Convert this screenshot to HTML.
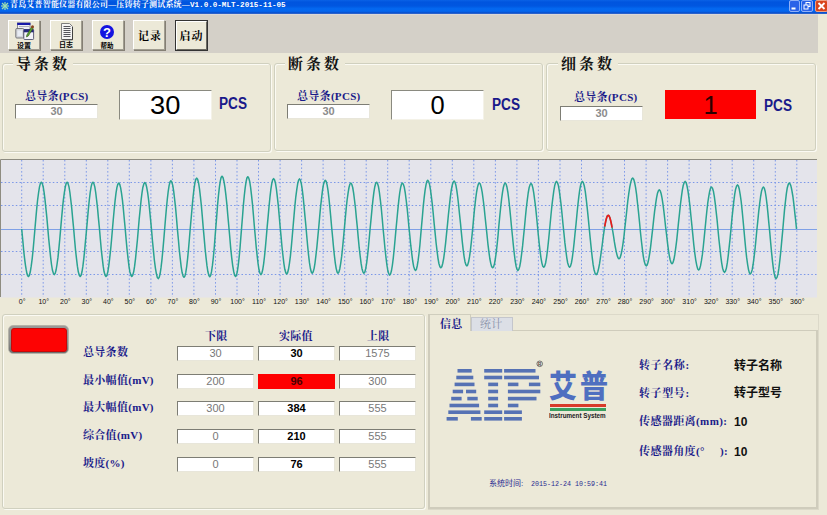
<!DOCTYPE html>
<html><head><meta charset="utf-8"><title>压铸转子测试系统</title>
<style>
html,body{margin:0;padding:0}
body{width:827px;height:515px;overflow:hidden;background:#ece9d8;position:relative;font-family:"Liberation Sans","Noto Sans CJK SC",sans-serif}
div{position:absolute;box-sizing:border-box;white-space:nowrap}
.serif{font-family:"Liberation Serif","Noto Serif CJK SC",serif}
#title{left:0;top:0;width:827px;height:13.500px;background:linear-gradient(#0a62e6 0,#0054de 15%,#0056e0 42%,#0468f0 62%,#0466ee 80%,#0a4cc8 93%,#4a78d0 100%)}
#title span{position:absolute;left:10px;top:-1px;font:bold 8px/11px "Liberation Serif","Noto Serif CJK SC",serif;color:#fff;letter-spacing:0.18px}
#tb{left:0;top:13.500px;width:818px;height:39px;background:#d4d0c8;border-top:1px solid #dcd8d8}
.btn{background:#ece9d8;border:1px solid;border-color:#fff #a09c90 #a09c90 #fff;box-shadow:1px 1px 0 #847f74}
.btn .t{left:0;width:100%;text-align:center;font-size:7px;line-height:8px;color:#000;font-weight:bold}
.gb{border:1px solid #d0d0bf;border-radius:3px;box-shadow:inset 1px 1px 0 #fbfaf3, 1px 1px 0 #fbfaf3}
.gt{background:#ece9d8;font:bold 15px/20px "Liberation Serif","Noto Serif CJK SC",serif;color:#111;padding:0 3px;letter-spacing:3px}
.lbl{font:bold 11px/16px "Liberation Serif","Noto Serif CJK SC",serif;color:#1a1a8a;letter-spacing:0.3px}
.fld{background:#fff;border:1px solid;border-color:#7d7d74 #e8e6da #e8e6da #7d7d74;text-align:center;font-size:11px}
.fld.g{color:#8c8c8c;font-weight:bold}
.fld.n{font-weight:normal;color:#787878}
.fld.b{color:#000;font-weight:bold}
.fld.red{background:#fe0000;color:#4a0000;border-color:#fe0000}
.big{background:#fff;border:1px solid;border-color:#8a8a80 #f4f2e8 #f4f2e8 #8a8a80;text-align:center;font-size:25.500px;line-height:28px;color:#000}
.pcs{font:bold 16px/16px "Liberation Sans",sans-serif;color:#1a1a8a;transform:scaleX(0.85);transform-origin:0 0}
</style></head><body>
<div id="title"><span>青岛艾普智能仪器有限公司—压铸转子测试系统—<b style="font:bold 7.600px/11px 'Liberation Mono',monospace;letter-spacing:0">V1.0.0-MLT-2015-11-05</b></span>
<svg style="position:absolute;left:0;top:1px" width="10" height="10" viewBox="0 0 10 10"><g stroke="#9fe0b0" stroke-width="1.2"><line x1="1" y1="5" x2="9" y2="5"/><line x1="5" y1="1" x2="5" y2="9"/><line x1="2" y1="2" x2="8" y2="8"/><line x1="8" y1="2" x2="2" y2="8"/></g></svg>
<svg style="position:absolute;left:788px;top:0" width="39" height="13" viewBox="0 0 39 13">
<rect x="1.5" y="0.5" width="10" height="11" rx="1.5" fill="#2a62e8" stroke="#8fb0f8" stroke-width="1"/><rect x="3.5" y="7.5" width="4" height="2" fill="#fff"/>
<rect x="13.500" y="0.5" width="11" height="11" rx="1.5" fill="#2a62e8" stroke="#8fb0f8" stroke-width="1"/><rect x="18" y="2.500" width="4" height="4" fill="none" stroke="#fff"/><rect x="16" y="5" width="4" height="4" fill="#2a62e8" stroke="#fff"/>
<rect x="27.500" y="0.5" width="12" height="11" rx="1.5" fill="#d8441c" stroke="#f0a080" stroke-width="1"/><path d="M30.5 3 L36.500 9 M36.500 3 L30.5 9" stroke="#fff" stroke-width="1.8"/>
</svg>
</div>
<div id="tb"></div>

<!-- toolbar buttons -->
<div class="btn" style="left:8px;top:20px;width:32px;height:30px">
<svg style="position:absolute;left:5px;top:1px" width="21" height="19" viewBox="0 0 21 19">
<rect x="3.500" y="1" width="12.500" height="8" fill="#eeeef4" stroke="#70707c" stroke-width="0.8"/><rect x="3.200" y="0.800" width="13.200" height="2.200" fill="#1818a8"/>
<line x1="5" y1="4.500" x2="15" y2="4.500" stroke="#a0a0b0" stroke-width="0.8"/>
<rect x="1.800" y="6.500" width="8" height="9.500" rx="1" fill="#d4d6dc" stroke="#6c6c70" stroke-width="0.9"/><rect x="3.500" y="8.500" width="4.500" height="5.500" fill="#e8ecf4"/>
<rect x="9.800" y="7.500" width="9.800" height="10" rx="0.8" fill="#f4f4fa" stroke="#50506c" stroke-width="0.9"/><rect x="9.800" y="7.300" width="9.800" height="3" fill="#26267c"/>
<path d="M17.600 5 L12.800 13 L12.500 15 L14.300 14 L19.200 6 Z" fill="#58a834" stroke="#385018" stroke-width="0.6"/><circle cx="18.500" cy="4.800" r="1.500" fill="#8a4420"/>
</svg>
<div class="t" style="top:20.500px">设置</div></div>
<div class="btn" style="left:50px;top:20px;width:32px;height:30px">
<svg style="position:absolute;left:9px;top:2px" width="14" height="18" viewBox="0 0 14 18">
<path d="M1.500 0.5 H9.500 L12.500 3.500 V16.500 H1.500 Z" fill="#f4f4f4" stroke="#707070" stroke-width="0.9"/><path d="M12.500 4 V16.800 H2.500" stroke="#404040" stroke-width="1" fill="none"/>
<g stroke="#55555c" stroke-width="1"><line x1="3.500" y1="3.500" x2="10.500" y2="3.500"/><line x1="3.500" y1="5.500" x2="10.500" y2="5.500"/><line x1="3.500" y1="7.500" x2="10.500" y2="7.500"/><line x1="3.500" y1="9.500" x2="10.500" y2="9.500"/><line x1="3.500" y1="11.500" x2="10.500" y2="11.500"/><line x1="3.500" y1="13.500" x2="10.500" y2="13.500"/></g>
</svg>
<div class="t" style="top:20px">日志</div></div>
<div class="btn" style="left:92px;top:20px;width:32px;height:30px">
<svg style="position:absolute;left:6px;top:3px" width="16" height="16" viewBox="0 0 16 16"><circle cx="8" cy="8" r="7" fill="#1414e0"/><text x="8" y="12.500" text-anchor="middle" font-family="Liberation Sans, sans-serif" font-weight="bold" font-size="13" fill="#fff">?</text></svg>
<div class="t" style="top:21px;left:-1px;font-size:6.500px">帮助</div></div>
<div class="btn" style="left:133px;top:20px;width:32px;height:30px"><div class="t serif" style="top:9px;left:1px;font-size:11px;font-weight:bold;line-height:12px;letter-spacing:1px">记录</div></div>
<div class="btn" style="left:176px;top:21px;width:31px;height:29px;outline:1px solid #333;box-shadow:none;border-color:#fff #6c6a62 #6c6a62 #fff"><div class="t serif" style="top:8px;font-size:11px;font-weight:bold;line-height:12px;letter-spacing:1px">启动</div></div>

<!-- group boxes -->
<div class="gb" style="left:2px;top:63px;width:269px;height:89px"></div>
<div class="gt" style="left:13px;top:54px">导条数</div>
<div class="lbl" style="left:25px;top:88px">总导条(PCS)</div>
<div class="fld g" style="left:15px;top:104px;width:83px;height:15px;line-height:13px">30</div>
<div class="big" style="left:119px;top:90px;width:93px;height:30px"><span style="display:inline-block;transform:scaleX(1.07)">30</span></div>
<div class="pcs" style="left:219px;top:96px">PCS</div>

<div class="gb" style="left:274px;top:63px;width:269px;height:88px"></div>
<div class="gt" style="left:285px;top:54px">断条数</div>
<div class="lbl" style="left:297px;top:88px">总导条(PCS)</div>
<div class="fld g" style="left:287px;top:104px;width:83px;height:15px;line-height:13px">30</div>
<div class="big" style="left:391px;top:90px;width:93px;height:30px">0</div>
<div class="pcs" style="left:491.500px;top:96.500px">PCS</div>

<div class="gb" style="left:546px;top:63px;width:270px;height:88px"></div>
<div class="gt" style="left:558px;top:54px">细条数</div>
<div class="lbl" style="left:574px;top:89px">总导条(PCS)</div>
<div class="fld g" style="left:560px;top:106px;width:83px;height:15px;line-height:13px">30</div>
<div class="big" style="left:665px;top:90px;width:91px;height:29px;background:#fe0000;border-color:#fe0000;color:#2a0000">1</div>
<div class="pcs" style="left:764px;top:98px">PCS</div>

<!-- chart -->
<svg style="position:absolute;left:0;top:155px" width="827" height="155" viewBox="0 155 827 155">
<rect x="0" y="159" width="817" height="138.500" fill="#e4e4eb"/>
<path d="M0.5 297 V159.500 H817" fill="none" stroke="#8e8c80" stroke-width="1"/>
<g stroke="#6f8fe8" stroke-width="1" stroke-dasharray="1.500 2.200" opacity="0.9"><line x1="21.7" y1="160" x2="21.7" y2="297"/><line x1="43.2" y1="160" x2="43.2" y2="297"/><line x1="64.8" y1="160" x2="64.8" y2="297"/><line x1="86.3" y1="160" x2="86.3" y2="297"/><line x1="107.8" y1="160" x2="107.8" y2="297"/><line x1="129.3" y1="160" x2="129.3" y2="297"/><line x1="150.9" y1="160" x2="150.9" y2="297"/><line x1="172.4" y1="160" x2="172.4" y2="297"/><line x1="193.9" y1="160" x2="193.9" y2="297"/><line x1="215.5" y1="160" x2="215.5" y2="297"/><line x1="237.0" y1="160" x2="237.0" y2="297"/><line x1="258.5" y1="160" x2="258.5" y2="297"/><line x1="280.1" y1="160" x2="280.1" y2="297"/><line x1="301.6" y1="160" x2="301.6" y2="297"/><line x1="323.1" y1="160" x2="323.1" y2="297"/><line x1="344.7" y1="160" x2="344.7" y2="297"/><line x1="366.2" y1="160" x2="366.2" y2="297"/><line x1="387.7" y1="160" x2="387.7" y2="297"/><line x1="409.2" y1="160" x2="409.2" y2="297"/><line x1="430.8" y1="160" x2="430.8" y2="297"/><line x1="452.3" y1="160" x2="452.3" y2="297"/><line x1="473.8" y1="160" x2="473.8" y2="297"/><line x1="495.4" y1="160" x2="495.4" y2="297"/><line x1="516.9" y1="160" x2="516.9" y2="297"/><line x1="538.4" y1="160" x2="538.4" y2="297"/><line x1="560.0" y1="160" x2="560.0" y2="297"/><line x1="581.5" y1="160" x2="581.5" y2="297"/><line x1="603.0" y1="160" x2="603.0" y2="297"/><line x1="624.5" y1="160" x2="624.5" y2="297"/><line x1="646.1" y1="160" x2="646.1" y2="297"/><line x1="667.6" y1="160" x2="667.6" y2="297"/><line x1="689.1" y1="160" x2="689.1" y2="297"/><line x1="710.7" y1="160" x2="710.7" y2="297"/><line x1="732.2" y1="160" x2="732.2" y2="297"/><line x1="753.7" y1="160" x2="753.7" y2="297"/><line x1="775.3" y1="160" x2="775.3" y2="297"/><line x1="796.8" y1="160" x2="796.8" y2="297"/><line x1="1" y1="182.5" x2="817" y2="182.5"/><line x1="1" y1="205.5" x2="817" y2="205.5"/><line x1="1" y1="251.5" x2="817" y2="251.5"/><line x1="1" y1="274.5" x2="817" y2="274.5"/></g>
<line x1="1" y1="229.500" x2="817" y2="229.500" stroke="#7fa0e6" stroke-width="1"/>
<path d="M21.7 229.0 L22.2 234.3 L22.7 239.6 L23.2 244.7 L23.6 249.6 L24.1 254.3 L24.6 258.6 L25.1 262.6 L25.6 266.1 L26.1 269.2 L26.6 271.8 L27.0 273.8 L27.5 275.3 L28.0 276.2 L28.5 276.5 L29.4 275.3 L30.3 271.8 L31.2 266.2 L32.2 258.7 L33.1 249.8 L34.0 239.8 L34.9 229.3 L35.8 218.9 L36.7 208.9 L37.6 200.0 L38.6 192.5 L39.5 186.9 L40.4 183.4 L41.3 182.2 L42.2 183.4 L43.2 186.8 L44.1 192.3 L45.0 199.6 L45.9 208.4 L46.9 218.1 L47.8 228.4 L48.7 238.7 L49.7 248.4 L50.6 257.2 L51.5 264.5 L52.4 270.0 L53.4 273.4 L54.3 274.6 L55.2 273.4 L56.1 270.0 L57.0 264.5 L58.0 257.2 L58.9 248.4 L59.8 238.7 L60.7 228.4 L61.6 218.1 L62.5 208.4 L63.4 199.6 L64.4 192.3 L65.3 186.8 L66.2 183.4 L67.1 182.2 L68.0 183.4 L69.0 186.9 L69.9 192.5 L70.8 200.0 L71.8 208.9 L72.7 218.9 L73.7 229.3 L74.6 239.8 L75.5 249.8 L76.5 258.7 L77.4 266.2 L78.3 271.8 L79.3 275.3 L80.2 276.5 L81.1 275.3 L82.0 271.8 L82.9 266.2 L83.8 258.7 L84.7 249.8 L85.6 239.8 L86.6 229.3 L87.5 218.9 L88.4 208.9 L89.3 200.0 L90.2 192.5 L91.1 186.9 L92.0 183.4 L92.9 182.2 L93.8 183.4 L94.8 186.9 L95.7 192.5 L96.6 200.0 L97.6 208.9 L98.5 218.9 L99.5 229.3 L100.4 239.8 L101.3 249.8 L102.3 258.7 L103.2 266.2 L104.1 271.8 L105.1 275.3 L106.0 276.5 L106.9 275.3 L107.8 271.9 L108.7 266.3 L109.6 258.9 L110.6 250.0 L111.5 240.2 L112.4 229.8 L113.3 219.3 L114.2 209.5 L115.1 200.6 L116.0 193.2 L116.9 187.6 L117.8 184.2 L118.8 183.0 L119.7 184.2 L120.6 187.6 L121.5 193.2 L122.5 200.6 L123.4 209.5 L124.3 219.3 L125.3 229.8 L126.2 240.2 L127.1 250.0 L128.1 258.9 L129.0 266.3 L129.9 271.9 L130.9 275.3 L131.8 276.5 L132.7 275.3 L133.7 271.8 L134.6 266.2 L135.5 258.8 L136.4 249.9 L137.4 240.0 L138.3 229.5 L139.2 219.0 L140.2 209.1 L141.1 200.2 L142.0 192.8 L142.9 187.2 L143.9 183.7 L144.8 182.5 L145.8 183.7 L146.7 187.3 L147.7 193.0 L148.7 200.6 L149.6 209.7 L150.6 219.9 L151.6 230.6 L152.5 241.2 L153.5 251.4 L154.4 260.5 L155.4 268.1 L156.4 273.8 L157.3 277.4 L158.3 278.6 L159.2 277.4 L160.1 273.8 L161.0 267.9 L161.9 260.2 L162.8 250.9 L163.7 240.6 L164.6 229.7 L165.5 218.8 L166.4 208.5 L167.3 199.2 L168.2 191.5 L169.1 185.6 L170.0 182.0 L170.9 180.8 L171.8 182.0 L172.8 185.6 L173.7 191.3 L174.6 199.0 L175.6 208.1 L176.5 218.3 L177.4 229.1 L178.4 239.8 L179.3 250.0 L180.3 259.1 L181.2 266.8 L182.1 272.5 L183.1 276.1 L184.0 277.3 L184.9 276.1 L185.8 272.4 L186.7 266.5 L187.6 258.6 L188.5 249.2 L189.4 238.7 L190.3 227.7 L191.3 216.7 L192.2 206.2 L193.1 196.8 L194.0 188.9 L194.9 183.0 L195.8 179.3 L196.7 178.1 L197.6 179.3 L198.6 183.0 L199.5 188.9 L200.4 196.7 L201.4 206.0 L202.3 216.4 L203.2 227.4 L204.2 238.4 L205.1 248.8 L206.1 258.1 L207.0 265.9 L207.9 271.8 L208.9 275.5 L209.8 276.7 L210.7 275.4 L211.5 271.7 L212.4 265.7 L213.3 257.8 L214.2 248.3 L215.0 237.6 L215.9 226.4 L216.8 215.3 L217.6 204.6 L218.5 195.1 L219.4 187.2 L220.3 181.2 L221.1 177.5 L222.0 176.2 L223.0 177.5 L223.9 181.2 L224.9 187.1 L225.9 195.1 L226.9 204.6 L227.8 215.2 L228.8 226.3 L229.8 237.5 L230.7 248.1 L231.7 257.6 L232.7 265.6 L233.7 271.5 L234.6 275.2 L235.6 276.5 L236.5 275.2 L237.3 271.6 L238.2 265.6 L239.1 257.7 L240.0 248.3 L240.8 237.7 L241.7 226.6 L242.6 215.5 L243.4 204.9 L244.3 195.5 L245.2 187.6 L246.1 181.6 L246.9 178.0 L247.8 176.7 L248.7 177.9 L249.7 181.5 L250.6 187.4 L251.5 195.1 L252.5 204.4 L253.4 214.8 L254.3 225.7 L255.3 236.5 L256.2 246.9 L257.2 256.2 L258.1 263.9 L259.0 269.8 L260.0 273.4 L260.9 274.6 L261.8 273.4 L262.7 269.8 L263.6 264.1 L264.5 256.5 L265.4 247.4 L266.3 237.3 L267.2 226.6 L268.2 215.9 L269.1 205.8 L270.0 196.7 L270.9 189.1 L271.8 183.4 L272.7 179.8 L273.6 178.6 L274.5 179.8 L275.5 183.3 L276.4 189.0 L277.3 196.6 L278.3 205.6 L279.2 215.7 L280.1 226.3 L281.1 236.9 L282.0 247.0 L283.0 256.0 L283.9 263.6 L284.8 269.3 L285.8 272.8 L286.7 274.0 L287.6 272.8 L288.5 269.3 L289.4 263.6 L290.4 256.1 L291.3 247.1 L292.2 237.0 L293.1 226.5 L294.0 215.9 L294.9 205.8 L295.8 196.8 L296.8 189.3 L297.7 183.6 L298.6 180.1 L299.5 178.9 L300.4 180.1 L301.3 183.6 L302.2 189.2 L303.1 196.7 L304.0 205.6 L304.9 215.6 L305.9 226.0 L306.8 236.5 L307.7 246.5 L308.6 255.4 L309.5 262.9 L310.4 268.5 L311.3 272.0 L312.2 273.2 L313.1 272.0 L314.1 268.6 L315.0 263.1 L315.9 255.7 L316.9 246.9 L317.8 237.1 L318.8 226.8 L319.7 216.4 L320.6 206.6 L321.6 197.8 L322.5 190.4 L323.4 184.9 L324.4 181.5 L325.3 180.3 L326.2 181.5 L327.1 184.9 L328.0 190.4 L328.9 197.8 L329.8 206.6 L330.7 216.4 L331.6 226.8 L332.6 237.1 L333.5 246.9 L334.4 255.7 L335.3 263.1 L336.2 268.6 L337.1 272.0 L338.0 273.2 L338.9 272.1 L339.8 268.7 L340.7 263.4 L341.7 256.2 L342.6 247.7 L343.5 238.1 L344.4 228.1 L345.3 218.1 L346.2 208.5 L347.1 200.0 L348.1 192.8 L349.0 187.5 L349.9 184.1 L350.8 183.0 L351.7 184.1 L352.7 187.5 L353.6 192.8 L354.5 200.0 L355.5 208.5 L356.4 218.1 L357.4 228.1 L358.3 238.1 L359.2 247.7 L360.2 256.2 L361.1 263.4 L362.0 268.7 L363.0 272.1 L363.9 273.2 L364.8 272.1 L365.7 268.7 L366.6 263.3 L367.5 256.1 L368.4 247.4 L369.3 237.8 L370.2 227.7 L371.2 217.6 L372.1 208.0 L373.0 199.3 L373.9 192.1 L374.8 186.7 L375.7 183.3 L376.6 182.2 L377.5 183.4 L378.5 186.8 L379.4 192.3 L380.3 199.7 L381.3 208.5 L382.2 218.3 L383.1 228.7 L384.1 239.0 L385.0 248.8 L386.0 257.6 L386.9 265.0 L387.8 270.5 L388.8 273.9 L389.7 275.1 L390.6 273.9 L391.5 270.5 L392.4 265.1 L393.3 257.8 L394.2 249.0 L395.1 239.3 L396.0 229.1 L397.0 218.8 L397.9 209.1 L398.8 200.3 L399.7 193.0 L400.6 187.6 L401.5 184.2 L402.4 183.0 L403.3 184.1 L404.3 187.3 L405.2 192.5 L406.1 199.5 L407.1 207.8 L408.0 217.0 L408.9 226.8 L409.9 236.5 L410.8 245.7 L411.8 254.0 L412.7 261.0 L413.6 266.2 L414.6 269.4 L415.5 270.5 L416.4 269.4 L417.2 266.0 L418.1 260.7 L419.0 253.5 L419.9 245.0 L420.7 235.4 L421.6 225.4 L422.5 215.4 L423.3 205.8 L424.2 197.3 L425.1 190.1 L426.0 184.8 L426.8 181.4 L427.7 180.3 L428.6 181.4 L429.6 184.6 L430.5 189.8 L431.4 196.8 L432.4 205.1 L433.3 214.3 L434.2 224.1 L435.2 233.8 L436.1 243.0 L437.1 251.3 L438.0 258.3 L438.9 263.5 L439.9 266.7 L440.8 267.8 L441.8 266.7 L442.7 263.5 L443.7 258.3 L444.6 251.5 L445.6 243.2 L446.5 234.1 L447.5 224.4 L448.4 214.7 L449.4 205.6 L450.3 197.3 L451.2 190.5 L452.2 185.3 L453.2 182.1 L454.1 181.0 L455.0 182.1 L455.9 185.2 L456.8 190.3 L457.7 197.0 L458.6 205.0 L459.5 214.0 L460.5 223.4 L461.4 232.9 L462.3 241.9 L463.2 249.9 L464.1 256.6 L465.0 261.7 L465.9 264.8 L466.8 265.9 L467.7 264.9 L468.6 261.8 L469.5 256.9 L470.4 250.3 L471.3 242.4 L472.2 233.7 L473.1 224.4 L473.9 215.2 L474.8 206.5 L475.7 198.6 L476.6 192.0 L477.5 187.1 L478.4 184.0 L479.3 183.0 L480.3 184.1 L481.2 187.2 L482.2 192.3 L483.1 199.0 L484.1 207.0 L485.0 216.0 L486.0 225.4 L487.0 234.8 L487.9 243.8 L488.9 251.8 L489.8 258.5 L490.8 263.6 L491.7 266.7 L492.7 267.8 L493.6 266.7 L494.5 263.6 L495.4 258.5 L496.3 251.8 L497.2 243.8 L498.1 234.8 L498.9 225.4 L499.8 216.0 L500.7 207.0 L501.6 199.0 L502.5 192.3 L503.4 187.2 L504.3 184.1 L505.2 183.0 L506.1 184.1 L507.0 187.3 L507.9 192.5 L508.8 199.5 L509.7 207.8 L510.6 217.0 L511.5 226.8 L512.5 236.5 L513.4 245.7 L514.3 254.0 L515.2 261.0 L516.1 266.2 L517.0 269.4 L517.9 270.5 L518.8 269.4 L519.8 266.2 L520.7 261.0 L521.6 254.1 L522.6 245.9 L523.5 236.7 L524.5 227.0 L525.4 217.3 L526.3 208.1 L527.3 199.9 L528.2 193.0 L529.1 187.8 L530.1 184.6 L531.0 183.5 L531.9 184.5 L532.8 187.6 L533.7 192.6 L534.6 199.3 L535.6 207.2 L536.5 216.0 L537.4 225.3 L538.3 234.7 L539.2 243.5 L540.1 251.4 L541.0 258.1 L541.9 263.1 L542.8 266.2 L543.8 267.2 L544.7 266.1 L545.6 263.0 L546.5 257.8 L547.4 251.0 L548.3 242.9 L549.2 233.8 L550.1 224.3 L551.0 214.8 L551.9 205.7 L552.9 197.6 L553.8 190.8 L554.7 185.6 L555.6 182.5 L556.5 181.4 L557.4 182.5 L558.4 185.6 L559.3 190.8 L560.2 197.6 L561.2 205.7 L562.1 214.8 L563.0 224.3 L564.0 233.8 L564.9 242.9 L565.9 251.0 L566.8 257.8 L567.7 263.0 L568.7 266.1 L569.6 267.2 L570.5 266.1 L571.4 263.0 L572.3 257.8 L573.2 251.0 L574.1 242.9 L575.0 233.8 L576.0 224.3 L576.9 214.8 L577.8 205.7 L578.7 197.6 L579.6 190.8 L580.5 185.6 L581.4 182.5 L582.3 181.4 L583.3 182.6 L584.3 186.0 L585.3 191.6 L586.2 198.9 L587.2 207.8 L588.2 217.6 L589.2 228.0 L590.2 238.4 L591.2 248.2 L592.2 257.1 L593.1 264.4 L594.1 270.0 L595.1 273.4 L596.1 274.6 L597.0 273.9 L597.8 271.7 L598.7 268.1 L599.6 263.4 L600.4 257.8 L601.3 251.5 L602.2 245.0 L603.0 238.4 L603.9 232.1 L604.7 226.5 L605.6 221.8 L606.5 218.2 L607.3 216.0 L608.2 215.3 L609.0 215.8 L609.8 217.5 L610.5 220.0 L611.3 223.5 L612.1 227.6 L612.9 232.2 L613.7 237.1 L614.4 241.9 L615.2 246.5 L616.0 250.6 L616.8 254.1 L617.5 256.6 L618.3 258.3 L619.1 258.8 L620.1 257.8 L621.0 254.8 L622.0 250.0 L623.0 243.6 L624.0 236.0 L624.9 227.4 L625.9 218.5 L626.9 209.5 L627.8 200.9 L628.8 193.3 L629.8 186.9 L630.8 182.1 L631.7 179.1 L632.7 178.1 L633.7 179.2 L634.6 182.4 L635.6 187.7 L636.6 194.6 L637.5 203.0 L638.5 212.2 L639.5 222.0 L640.4 231.8 L641.4 241.0 L642.4 249.4 L643.3 256.3 L644.3 261.6 L645.3 264.8 L646.2 265.9 L647.2 264.9 L648.1 262.1 L649.0 257.6 L650.0 251.6 L650.9 244.4 L651.8 236.3 L652.8 227.8 L653.7 219.4 L654.6 211.3 L655.6 204.1 L656.5 198.1 L657.4 193.6 L658.4 190.8 L659.3 189.8 L660.2 190.7 L661.1 193.5 L662.0 197.9 L662.9 203.7 L663.8 210.7 L664.7 218.5 L665.6 226.8 L666.6 235.0 L667.5 242.8 L668.4 249.8 L669.3 255.6 L670.2 260.0 L671.1 262.8 L672.0 263.7 L672.9 262.7 L673.9 259.6 L674.8 254.7 L675.7 248.2 L676.7 240.4 L677.6 231.7 L678.5 222.6 L679.5 213.4 L680.4 204.7 L681.4 196.9 L682.3 190.4 L683.2 185.5 L684.2 182.4 L685.1 181.4 L686.1 182.5 L687.0 185.8 L688.0 191.1 L689.0 198.1 L690.0 206.5 L690.9 215.8 L691.9 225.7 L692.9 235.6 L693.8 244.9 L694.8 253.3 L695.8 260.3 L696.8 265.6 L697.7 268.9 L698.7 270.0 L699.6 269.0 L700.5 265.9 L701.4 260.9 L702.4 254.4 L703.3 246.5 L704.2 237.7 L705.1 228.5 L706.0 219.3 L706.9 210.5 L707.8 202.6 L708.8 196.1 L709.7 191.1 L710.6 188.0 L711.5 187.0 L712.4 188.1 L713.4 191.2 L714.3 196.3 L715.2 203.1 L716.1 211.2 L717.1 220.2 L718.0 229.7 L718.9 239.2 L719.9 248.2 L720.8 256.3 L721.7 263.1 L722.6 268.2 L723.6 271.3 L724.5 272.4 L725.4 271.3 L726.4 268.1 L727.3 262.9 L728.2 255.9 L729.1 247.6 L730.1 238.4 L731.0 228.7 L731.9 218.9 L732.9 209.7 L733.8 201.4 L734.7 194.4 L735.6 189.2 L736.6 186.0 L737.5 184.9 L738.4 186.0 L739.3 189.3 L740.2 194.6 L741.2 201.7 L742.1 210.1 L743.0 219.5 L743.9 229.4 L744.8 239.4 L745.7 248.8 L746.6 257.2 L747.6 264.3 L748.5 269.6 L749.4 272.9 L750.3 274.0 L751.2 272.9 L752.2 269.7 L753.1 264.5 L754.0 257.6 L755.0 249.4 L755.9 240.2 L756.8 230.5 L757.8 220.8 L758.7 211.6 L759.7 203.4 L760.6 196.5 L761.5 191.3 L762.5 188.1 L763.4 187.0 L764.3 188.1 L765.2 191.5 L766.1 197.0 L767.0 204.2 L767.9 212.9 L768.8 222.6 L769.8 232.8 L770.7 243.0 L771.6 252.7 L772.5 261.4 L773.4 268.6 L774.3 274.1 L775.2 277.5 L776.1 278.6 L777.0 277.4 L778.0 273.9 L778.9 268.2 L779.8 260.6 L780.8 251.5 L781.7 241.4 L782.7 230.8 L783.6 220.2 L784.5 210.1 L785.5 201.0 L786.4 193.4 L787.3 187.7 L788.3 184.2 L789.2 183.0 L789.7 183.3 L790.2 184.2 L790.8 185.6 L791.3 187.6 L791.8 190.1 L792.3 193.0 L792.9 196.5 L793.4 200.3 L793.9 204.5 L794.4 209.0 L794.9 213.8 L795.5 218.8 L796.0 223.8 L796.5 229.0" fill="none" stroke="#2aa391" stroke-width="1.500" stroke-linejoin="round"/>
<path d="M604.7 226.5 L605.6 221.8 L606.5 218.2 L607.3 216.0 L608.2 215.3 L609.0 215.8 L609.8 217.5 L610.5 220.0 L611.3 223.5 L612.1 227.6" fill="none" stroke="#f01818" stroke-width="1.600" stroke-linejoin="round"/>
<g font-family="Liberation Sans, sans-serif" font-size="7" fill="#111" text-anchor="middle"><text x="22.2" y="304">0°</text><text x="43.7" y="304">10°</text><text x="65.3" y="304">20°</text><text x="86.8" y="304">30°</text><text x="108.3" y="304">40°</text><text x="129.8" y="304">50°</text><text x="151.4" y="304">60°</text><text x="172.9" y="304">70°</text><text x="194.4" y="304">80°</text><text x="216.0" y="304">90°</text><text x="237.5" y="304">100°</text><text x="259.0" y="304">110°</text><text x="280.6" y="304">120°</text><text x="302.1" y="304">130°</text><text x="323.6" y="304">140°</text><text x="345.2" y="304">150°</text><text x="366.7" y="304">160°</text><text x="388.2" y="304">170°</text><text x="409.7" y="304">180°</text><text x="431.3" y="304">190°</text><text x="452.8" y="304">200°</text><text x="474.3" y="304">210°</text><text x="495.9" y="304">220°</text><text x="517.4" y="304">230°</text><text x="538.9" y="304">240°</text><text x="560.5" y="304">250°</text><text x="582.0" y="304">260°</text><text x="603.5" y="304">270°</text><text x="625.0" y="304">280°</text><text x="646.6" y="304">290°</text><text x="668.1" y="304">300°</text><text x="689.6" y="304">310°</text><text x="711.2" y="304">320°</text><text x="732.7" y="304">330°</text><text x="754.2" y="304">340°</text><text x="775.8" y="304">350°</text><text x="797.3" y="304">360°</text></g>
</svg>

<!-- bottom-left -->
<div class="gb" style="left:2px;top:314px;width:423px;height:195px"></div>
<div style="left:8px;top:325px;width:61px;height:29px;border-radius:5px;background:linear-gradient(#9a9a98 0,#8a8a88 60%,#6e6e6c 100%);border:1px solid #b4b2a8"></div>
<div style="left:11px;top:328px;width:56px;height:24px;border-radius:3px;background:#fd0303;border:1px solid #c80808"></div>
<div class="lbl" style="left:205px;top:328px">下限</div>
<div class="lbl" style="left:279px;top:328px">实际值</div>
<div class="lbl" style="left:367px;top:328px">上限</div>
<div class="lbl" style="left:83px;top:344px">总导条数</div><div class="fld g n" style="left:177px;top:346px;width:77px;height:15px;line-height:13px">30</div><div class="fld b" style="left:258px;top:346px;width:77px;height:15px;line-height:13px">30</div><div class="fld g n" style="left:339px;top:346px;width:77px;height:15px;line-height:13px">1575</div><div class="lbl" style="left:83px;top:372px">最小幅值(mV)</div><div class="fld g n" style="left:177px;top:374px;width:77px;height:15px;line-height:13px">200</div><div class="fld b red" style="left:258px;top:374px;width:77px;height:15px;line-height:13px">96</div><div class="fld g n" style="left:339px;top:374px;width:77px;height:15px;line-height:13px">300</div><div class="lbl" style="left:83px;top:399px">最大幅值(mV)</div><div class="fld g n" style="left:177px;top:401px;width:77px;height:15px;line-height:13px">300</div><div class="fld b" style="left:258px;top:401px;width:77px;height:15px;line-height:13px">384</div><div class="fld g n" style="left:339px;top:401px;width:77px;height:15px;line-height:13px">555</div><div class="lbl" style="left:83px;top:427px">综合值(mV)</div><div class="fld g n" style="left:177px;top:429px;width:77px;height:15px;line-height:13px">0</div><div class="fld b" style="left:258px;top:429px;width:77px;height:15px;line-height:13px">210</div><div class="fld g n" style="left:339px;top:429px;width:77px;height:15px;line-height:13px">555</div><div class="lbl" style="left:83px;top:455px">坡度(%)</div><div class="fld g n" style="left:177px;top:457px;width:77px;height:15px;line-height:13px">0</div><div class="fld b" style="left:258px;top:457px;width:77px;height:15px;line-height:13px">76</div><div class="fld g n" style="left:339px;top:457px;width:77px;height:15px;line-height:13px">555</div>

<!-- tab control -->
<div style="left:428px;top:314px;width:391px;height:196px;border:1px solid #dcd9c9"></div>
<div style="left:428px;top:330px;width:390px;height:179px;border:2px solid #cfccbc;border-top:1px solid #cfccbc"></div>
<div style="left:428px;top:314px;width:43px;height:17px;background:#ece9d8;border:1px solid #cfcdbd;border-bottom:none;border-left:2px solid #cfccbc"></div>
<div style="left:471px;top:317px;width:42px;height:14px;background:#dcdfe6;border:1px solid #c4c6cc;border-bottom:none"></div>
<div class="lbl" style="left:440px;top:316px">信息</div>
<div class="lbl" style="left:480px;top:316px;color:#8890a6;font-weight:normal">统计</div>

<svg style="position:absolute;left:440px;top:358px" width="110" height="66" viewBox="440 358 110 66">
<g fill="#5672b4"><rect x="457.5" y="369.0" width="14.2" height="3.6"/><rect x="484.2" y="369.0" width="18.0" height="3.6"/><rect x="504.1" y="369.0" width="31.4" height="3.6"/><rect x="456.3" y="375.7" width="17.0" height="3.6"/><rect x="484.2" y="375.7" width="18.0" height="3.6"/><rect x="504.1" y="375.7" width="34.9" height="3.6"/><rect x="454.6" y="382.6" width="19.9" height="3.6"/><rect x="488.2" y="382.6" width="9.9" height="3.6"/><rect x="507.9" y="382.6" width="10.5" height="3.6"/><rect x="528.9" y="382.6" width="11.4" height="3.6"/><rect x="452.7" y="389.7" width="10.4" height="3.6"/><rect x="466.0" y="389.7" width="10.2" height="3.6"/><rect x="488.2" y="389.7" width="9.9" height="3.6"/><rect x="507.9" y="389.7" width="32.4" height="3.6"/><rect x="451.2" y="396.8" width="10.4" height="3.6"/><rect x="467.3" y="396.8" width="10.4" height="3.6"/><rect x="488.2" y="396.8" width="9.9" height="3.6"/><rect x="507.9" y="396.8" width="28.6" height="3.6"/><rect x="449.5" y="403.7" width="29.6" height="3.6"/><rect x="488.2" y="403.7" width="9.9" height="3.6"/><rect x="507.9" y="403.7" width="10.5" height="3.6"/><rect x="448.3" y="410.4" width="32.1" height="3.6"/><rect x="484.2" y="410.4" width="18.0" height="3.6"/><rect x="504.1" y="410.4" width="17.8" height="3.6"/><rect x="446.6" y="417.0" width="11.2" height="3.6"/><rect x="470.9" y="417.0" width="10.8" height="3.6"/><rect x="484.2" y="417.0" width="18.0" height="3.6"/><rect x="504.1" y="417.0" width="17.8" height="3.6"/></g>
<circle cx="539.700" cy="363.800" r="2.800" fill="none" stroke="#444" stroke-width="0.7"/><text x="539.700" y="365.600" font-size="4.500" font-family="Liberation Sans, sans-serif" font-weight="bold" text-anchor="middle" fill="#444">R</text>
</svg>
<div style="left:549px;top:366.500px;font:900 28px/40px 'Liberation Sans','Noto Sans CJK SC',sans-serif;color:#4f6fc0;letter-spacing:3px;transform:scaleY(1.09);transform-origin:0 50%">艾普</div>
<div style="left:549.500px;top:403.500px;width:56px;height:3px;background:#d83a2a"></div>
<div style="left:549.500px;top:408px;width:56px;height:2.500px;background:#3aa060"></div>
<div style="left:549px;top:411px;font:bold 7.500px/10px 'Liberation Sans',sans-serif;color:#222;transform:scaleX(0.84);transform-origin:0 0">Instrument System</div>

<div class="lbl" style="left:639px;top:357px;letter-spacing:0.6px">转子名称:</div>
<div class="lbl" style="left:639px;top:385px;letter-spacing:0.6px">转子型号:</div>
<div class="lbl" style="left:639px;top:413px;letter-spacing:0.4px">传感器距离(mm):</div>
<div class="lbl" style="left:639px;top:443px;letter-spacing:0.4px">传感器角度(°<span style="display:inline-block;width:15px"></span>):</div>
<div style="left:734px;top:358px;font:bold 12px/16px 'Liberation Sans','Noto Sans CJK SC',sans-serif;color:#111">转子名称</div>
<div style="left:734px;top:385px;font:bold 12px/16px 'Liberation Sans','Noto Sans CJK SC',sans-serif;color:#111">转子型号</div>
<div style="left:734px;top:414px;font:bold 12px/16px 'Liberation Sans',sans-serif;color:#111">10</div>
<div style="left:734px;top:444px;font:bold 12px/16px 'Liberation Sans',sans-serif;color:#111">10</div>

<div style="left:489px;top:479px;font:8px/10px 'Liberation Sans','Noto Sans CJK SC',sans-serif;color:#2a2a90">系统时间:</div>
<div style="left:531px;top:479px;font:6.670px/10px 'Liberation Mono',monospace;color:#2a2a90;transform:scaleY(1.2);transform-origin:0 50%">2015-12-24 10:59:41</div>
</body></html>
